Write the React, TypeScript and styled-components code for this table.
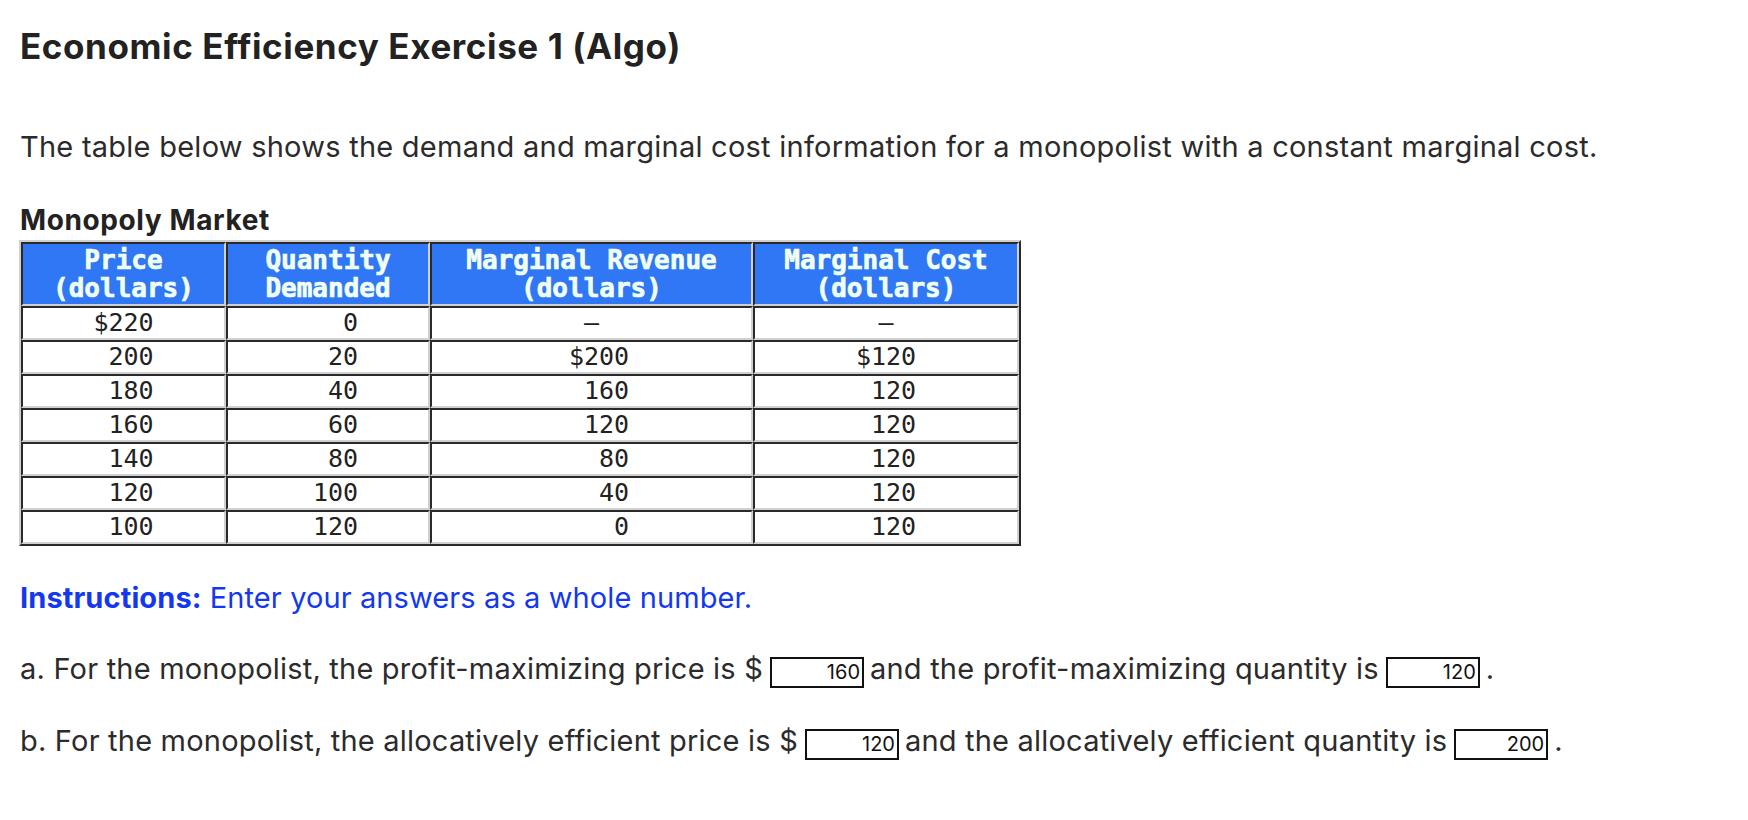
import React from "react";
import styled, { createGlobalStyle } from "styled-components";

const GlobalStyle = createGlobalStyle`
  body {
    margin: 0;
    background: #fff;
    font-family: "Inter", "Open Sans", sans-serif;
    color: #2b2b2b;
  }
`;

const Page = styled.div`
  padding: 26px 0 0 20px;
`;

const Title = styled.h1`
  margin: 0;
  font-size: 35px;
  line-height: 40px;
  letter-spacing: 0.6px;
  font-weight: 700;
  color: #222;
`;

const Intro = styled.p`
  margin: 64px 0 0;
  font-size: 29px;
  line-height: 34px;
  letter-spacing: 0.25px;
`;

const Caption = styled.div`
  margin-top: 41px;
  font-size: 28px;
  line-height: 31px;
  letter-spacing: 0.6px;
  font-weight: 700;
  color: #222;
`;

const Table = styled.table`
  margin: 4px 0 0 -1px;
  border-collapse: separate;
  border-spacing: 0;
  border: 2px solid;
  border-color: #d0d0d0 #2a2a2a #2a2a2a #d0d0d0;
  font-family: "DejaVu Sans Mono", "Liberation Mono", monospace;
  font-size: 25px;
`;

const Head = styled.th<{ w: number }>`
  width: ${(p) => p.w}px;
  height: 64px;
  padding: 0;
  box-sizing: border-box;
  background: #2f77f5;
  color: #f0fff0;
  font-size: 26px;
  font-weight: 700;
  -webkit-text-stroke: 0.7px #f0fff0;
  line-height: 28px;
  border: 2px solid;
  border-color: #2a2a2a #d0d0d0 #d0d0d0 #2a2a2a;
  vertical-align: middle;
`;

const Cell = styled.td`
  height: 34px;
  padding: 0;
  box-sizing: border-box;
  line-height: 30px;
  text-align: center;
  white-space: pre;
  color: #222;
  border: 2px solid;
  border-color: #2a2a2a #d0d0d0 #d0d0d0 #2a2a2a;
`;

const Instructions = styled.p`
  margin: 35px 0 0;
  font-size: 29px;
  line-height: 34px;
  letter-spacing: 0.1px;
  color: #1338f0;

  strong {
    font-weight: 700;
  }
`;

const Question = styled.p<{ gap: number }>`
  margin: 0;
  margin-top: ${(p) => p.gap}px;
  font-size: 29px;
  line-height: 34px;
  letter-spacing: 0.2px;
`;

const Answer = styled.span`
  display: inline-block;
  box-sizing: border-box;
  width: 94px;
  height: 31px;
  margin: 0 6px 0 7px;
  padding: 0 2px 0 0;
  border: 2px solid #111;
  font-size: 20px;
  line-height: 27px;
  letter-spacing: 0;
  text-align: right;
  color: #111;
`;

const heads = [
  { w: 205, lines: ["Price", "(dollars)"] },
  { w: 204, lines: ["Quantity", "Demanded"] },
  { w: 323, lines: ["Marginal Revenue", "(dollars)"] },
  { w: 266, lines: ["Marginal Cost", "(dollars)"] },
];

const rows = [
  ["$220", "   0", "—", "—"],
  [" 200", "  20", " $200", "$120"],
  [" 180", "  40", "  160", " 120"],
  [" 160", "  60", "  120", " 120"],
  [" 140", "  80", "   80", " 120"],
  [" 120", " 100", "   40", " 120"],
  [" 100", " 120", "    0", " 120"],
];

export default function App() {
  return (
    <Page>
      <GlobalStyle />
      <Title>Economic Efficiency Exercise 1 (Algo)</Title>
      <Intro>
        The table below shows the demand and marginal cost information for a
        monopolist with a constant marginal cost.
      </Intro>
      <Caption>Monopoly Market</Caption>
      <Table>
        <thead>
          <tr>
            {heads.map((h) => (
              <Head key={h.lines[0]} w={h.w}>
                {h.lines[0]}
                <br />
                {h.lines[1]}
              </Head>
            ))}
          </tr>
        </thead>
        <tbody>
          {rows.map((r, i) => (
            <tr key={i}>
              {r.map((v, j) => (
                <Cell key={j}>{v}</Cell>
              ))}
            </tr>
          ))}
        </tbody>
      </Table>
      <Instructions>
        <strong>Instructions:</strong> Enter your answers as a whole number.
      </Instructions>
      <Question gap={37}>
        a. For the monopolist, the profit-maximizing price is $
        <Answer>160</Answer>and the profit-maximizing quantity is
        <Answer>120</Answer>.
      </Question>
      <Question gap={36}>
        b. For the monopolist, the allocatively efficient price is $
        <Answer>120</Answer>and the allocatively efficient quantity is
        <Answer>200</Answer>.
      </Question>
    </Page>
  );
}
